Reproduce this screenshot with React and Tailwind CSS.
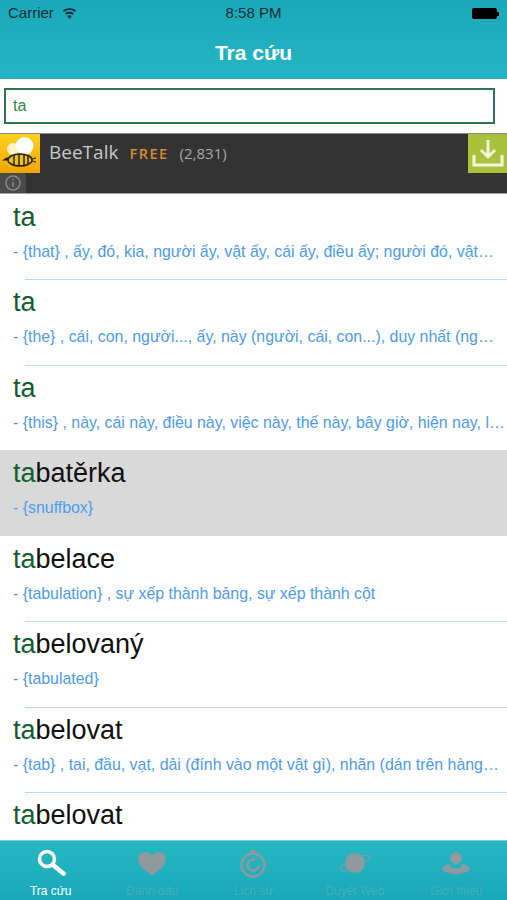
const rows = [
  { match: 'ta', rest: '', desc: '- {that} , ấy, đó, kia, người ấy, vật ấy, cái ấy, điều ấy; người đó, vật…' },
  { match: 'ta', rest: '', desc: '- {the} , cái, con, người..., ấy, này (người, cái, con...), duy nhất (ng…' },
  { match: 'ta', rest: '', desc: '- {this} , này, cái này, điều này, việc này, thế này, bây giờ, hiện nay, l…' },
  { match: 'ta', rest: 'batěrka', desc: '- {snuffbox}', active: true },
  { match: 'ta', rest: 'belace', desc: '- {tabulation} , sự xếp thành bảng, sự xếp thành cột' },
  { match: 'ta', rest: 'belovaný', desc: '- {tabulated}' },
  { match: 'ta', rest: 'belovat', desc: '- {tab} , tai, đầu, vạt, dải (đính vào một vật gì), nhãn (dán trên hàng…' },
  { match: 'ta', rest: 'belovat', desc: '' },
]

const SearchIcon = () => (
  <svg width="30" height="30" viewBox="0 0 30 30" fill="none" stroke="#fff" strokeLinecap="round">
    <circle cx="11" cy="11" r="7.5" strokeWidth="3.5" />
    <path d="M17 17 L27.5 25.5" strokeWidth="4.5" />
  </svg>
)

const HeartIcon = () => (
  <svg width="30" height="30" viewBox="0 0 30 30" fill="#8f9a9f">
    <path d="M15 28 C9 22.5 1 17.5 1 11 C1 7 4 4 8 4 C11 4 13.5 5.5 15 8 C16.5 5.5 19 4 22 4 C26 4 29 7 29 11 C29 17.5 21 22.5 15 28 Z" />
  </svg>
)

const TimerIcon = () => (
  <svg width="30" height="30" viewBox="0 0 30 30" fill="none" stroke="#8f9a9f">
    <circle cx="15" cy="17" r="11.5" strokeWidth="2.5" />
    <path d="M20.5 17 A5.5 5.5 0 1 1 17 12" strokeWidth="2.5" />
    <path d="M12.5 3 H17.5 M15 3 V5.5" strokeWidth="2.5" />
  </svg>
)

const PlanetIcon = () => (
  <svg width="32" height="30" viewBox="0 0 32 30" fill="none">
    <circle cx="16" cy="15" r="10" fill="#8f9a9f" />
    <ellipse cx="16" cy="15" rx="16" ry="4.5" transform="rotate(-25 16 15)" stroke="#8f9a9f" strokeWidth="1" />
  </svg>
)

const PersonIcon = () => (
  <svg width="30" height="30" viewBox="0 0 30 30" fill="#8f9a9f">
    <circle cx="15" cy="10" r="6" />
    <path d="M1 20 C3 18 6 16.5 8 16 C9 19 12 20.5 15 20.5 C18 20.5 21 19 22 16 C24 16.5 27 18 29 20 C28 24 22 26 15 26 C8 26 2 24 1 20 Z" />
  </svg>
)

const tabs = [
  { label: 'Tra cứu', icon: <SearchIcon />, active: true },
  { label: 'Đánh dấu', icon: <HeartIcon /> },
  { label: 'Lịch sử', icon: <TimerIcon /> },
  { label: 'Duyệt Web', icon: <PlanetIcon /> },
  { label: 'Giới thiệu', icon: <PersonIcon /> },
]

const BeeLogo = () => (
  <svg width="40" height="39" viewBox="0 0 40 39">
    <defs>
      <linearGradient id="beeBg" x1="0" y1="0" x2="0" y2="1">
        <stop offset="0" stopColor="#ffd21f" />
        <stop offset="1" stopColor="#f2a600" />
      </linearGradient>
    </defs>
    <rect width="40" height="39" fill="url(#beeBg)" />
    <circle cx="13" cy="15" r="6" fill="#fff3c4" />
    <circle cx="24.5" cy="12" r="9" fill="#fff" />
    <ellipse cx="20" cy="26" rx="12" ry="6" fill="#f5c400" stroke="#222" strokeWidth="1.5" />
    <path d="M14 21 V31 M19 20 V32 M24 20 V32 M28 21 V31" stroke="#222" strokeWidth="1.5" />
    <path d="M8 26 L4 26 L7 24 Z M32 25 L36 24 M32 27 L36 28" stroke="#222" strokeWidth="1.2" />
  </svg>
)

const App = () => {
  return (
    <div className="w-[507px] h-[900px] flex flex-col bg-white overflow-hidden font-['Liberation_Sans',sans-serif]">
      <header className="h-[79px] shrink-0 bg-gradient-to-b from-[#1aa9b9] to-[#25b4c2]">
        <div className="h-[27px] px-[8px] flex items-center justify-between relative text-[#0c2c30]">
          <div className="flex items-center gap-[8px] text-[15px]">
            <span>Carrier</span>
            <svg width="15" height="11" viewBox="0 0 16 12" fill="#0c2c30">
              <path d="M8 12 L5.6 8.8 C7 7.7 9 7.7 10.4 8.8 Z" />
              <path d="M4.4 7.4 L3.2 5.8 C6 3.7 10 3.7 12.8 5.8 L11.6 7.4 C9.4 5.8 6.6 5.8 4.4 7.4 Z" />
              <path d="M2 4.4 L0.8 2.8 C5 -0.6 11 -0.6 15.2 2.8 L14 4.4 C10.4 1.6 5.6 1.6 2 4.4 Z" />
            </svg>
          </div>
          <span className="absolute left-0 right-0 text-center text-[15px]">8:58 PM</span>
          <div className="flex items-center">
            <div className="w-[25px] h-[11px] rounded-[2px] bg-black" />
            <div className="w-[2px] h-[4px] bg-black" />
          </div>
        </div>
        <h1 className="mt-[8px] text-center text-white text-[21px] leading-[36px] font-bold">Tra cứu</h1>
      </header>

      <div className="h-[54px] shrink-0 pl-[4px] pr-[12px] pt-[9px]">
        <div className="h-[36px] border-2 border-[#2f7355] pl-[7px] flex items-center text-[16px] text-[#2f8a45]">ta</div>
      </div>

      <div className="h-[60.5px] shrink-0 bg-[#333333] border-t border-[#8a8a8a] border-b border-b-[#a0a0a0] flex flex-col">
        <div className="h-[38px] flex items-center shrink-0">
          <BeeLogo />
          <div className="flex-1 flex items-baseline pl-[9px] pb-[2px] font-['Open_Sans',sans-serif]">
            <span className="text-[19px] text-[#c8c8c8]">BeeTalk</span>
            <span className="ml-[11px] text-[14.5px] font-semibold tracking-[1.5px] text-[#d98c2b]">FREE</span>
            <span className="ml-[11px] text-[15px] text-[#a8a8a8]">(2,831)</span>
          </div>
          <div className="w-[39px] h-[39px] bg-[#a9c13b] flex items-center justify-center">
            <svg width="32" height="30" viewBox="0 0 32 30" fill="none" stroke="#f2f6dc" strokeWidth="3">
              <path d="M2 17 V27 H30 V17" />
              <path d="M16 2 V19 M9 12 L16 19 L23 12" />
            </svg>
          </div>
        </div>
        <div className="w-[26px] flex-1 mt-[1px] bg-[#4a4a4a] flex items-center justify-center">
          <svg width="16" height="16" viewBox="0 0 16 16" fill="none" stroke="#8a8a8a" strokeWidth="1.5">
            <circle cx="8" cy="8" r="7" />
            <path d="M8 7 V12 M8 4 V5.5" />
          </svg>
        </div>
      </div>

      <div className="flex-1 min-h-0 overflow-hidden">
        {rows.map((row, i) => (
          <div key={i} className={`h-[85.5px] relative pl-[13px] ${row.active ? 'bg-[#d9d9d9]' : ''}`}>
            <div className="pt-[7px] text-[27px] leading-[32px]">
              <span className="text-[#0f5f2e]">{row.match}</span>
              <span className="text-[#111111]">{row.rest}</span>
            </div>
            {row.desc && (
              <div className="mt-[9px] text-[15.9px] leading-[20px] text-[#4b9cf0] whitespace-nowrap">{row.desc}</div>
            )}
            {!row.active && i < 7 && i !== 2 && (
              <div className="absolute left-[25px] right-0 -bottom-px h-px bg-[#b5d8fb]" />
            )}
          </div>
        ))}
      </div>

      <nav className="h-[60px] shrink-0 grid grid-cols-5 bg-gradient-to-b from-[#26b7c4] to-[#19a8b7] border-t border-[#7fd0d8]">
        {tabs.map((tab) => (
          <div key={tab.label} className="flex flex-col items-center pt-[7px]">
            <div className="h-[30px] flex items-center justify-center">{tab.icon}</div>
            <span className={`mt-[6px] text-[12px] leading-[14px] ${tab.active ? 'text-white' : 'text-[#45aeba]'}`}>{tab.label}</span>
          </div>
        ))}
      </nav>
    </div>
  )
}

export default App
